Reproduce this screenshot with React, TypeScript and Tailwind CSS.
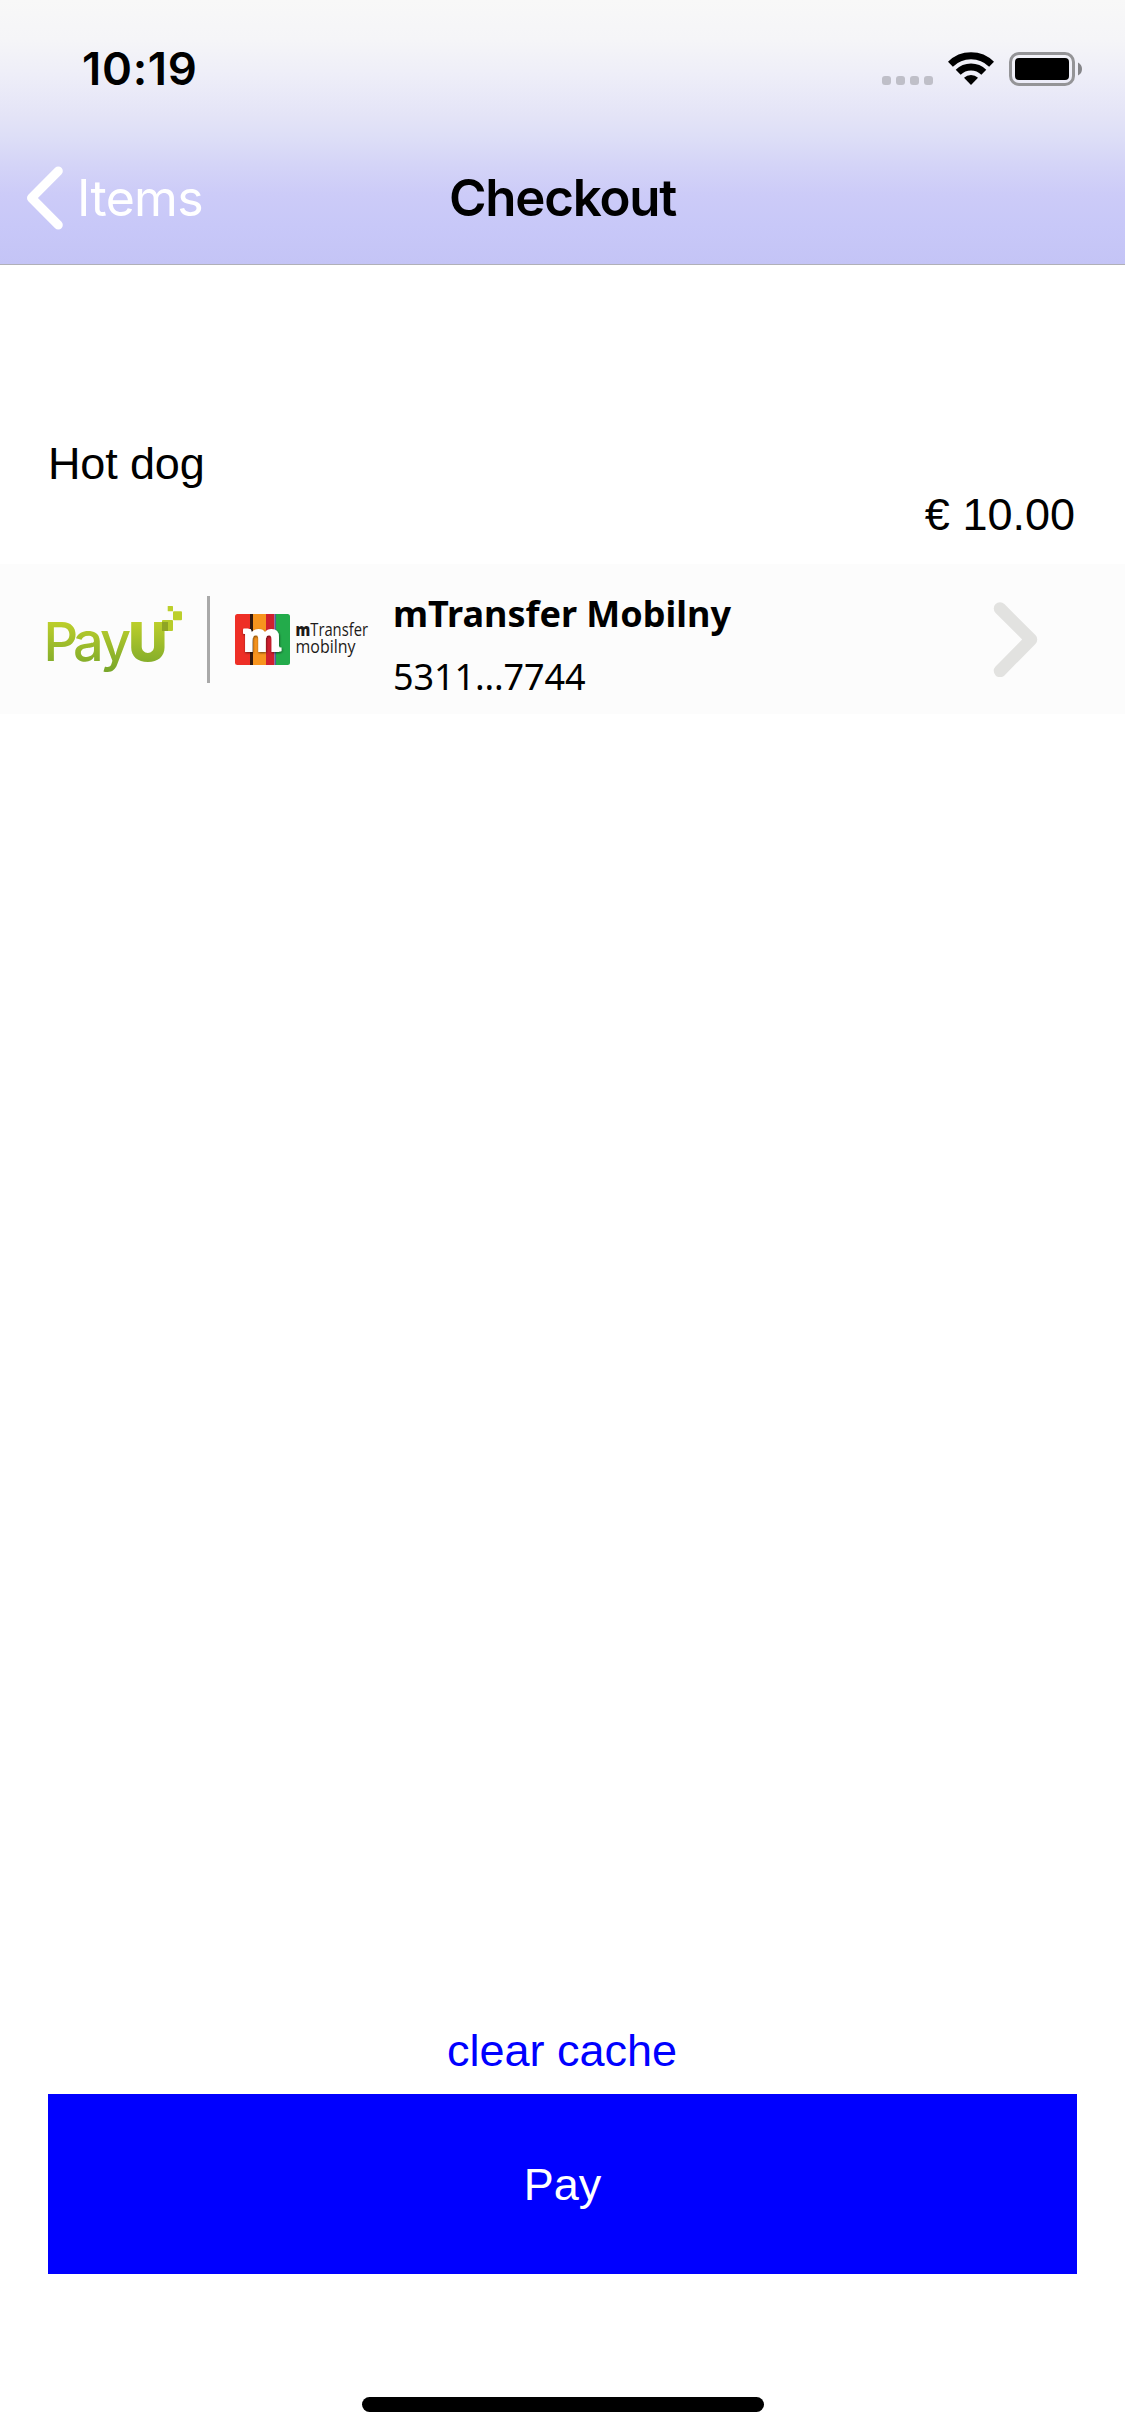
function StatusBar() {
  return (
    <div className="flex h-[132px] items-start justify-between pr-[43px] pl-[82px]">
      <span className="mt-[42px] font-['Inter',sans-serif] text-[45.5px] leading-[54px] font-semibold tracking-[0.7px] text-black">
        10:19
      </span>
      <div className="mt-[52px] flex items-start">
        <div className="mt-6 flex gap-[5px]">
          <i className="size-[9px] rounded-[3px] bg-[#bfbfc8]" />
          <i className="size-[9px] rounded-[3px] bg-[#bfbfc8]" />
          <i className="size-[9px] rounded-[3px] bg-[#bfbfc8]" />
          <i className="size-[9px] rounded-[3px] bg-[#bfbfc8]" />
        </div>
        <svg className="ml-[15px]" width="46" height="34" viewBox="0 0 46 34">
          <path d="M2.4 12.2a29.1 29.1 0 0 1 41.2 0" fill="none" stroke="#000" strokeWidth="7" />
          <path d="M10.2 20.2a18.1 18.1 0 0 1 25.6 0" fill="none" stroke="#000" strokeWidth="7" />
          <path d="M23 33l-7-7.2a10 10 0 0 1 14 0z" />
        </svg>
        <svg className="ml-[15px]" width="73" height="34" viewBox="0 0 73 34">
          <rect x="1.5" y="1.5" width="63" height="31" rx="8.5" fill="none" stroke="#949497" strokeWidth="3" />
          <rect x="6" y="6" width="54" height="22" rx="4" />
          <path d="M69 10.5q4 2 4 6.5t-4 6.5z" fill="#858589" />
        </svg>
      </div>
    </div>
  );
}

function NavBar() {
  return (
    <div className="grid h-[132px] grid-cols-3 items-center">
      <button className="flex h-[132px] items-center pl-[26px] text-white">
        <svg width="38" height="64" viewBox="0 0 38 64">
          <path d="M32.3 5L5.5 32l26.8 27" fill="none" stroke="currentColor" strokeWidth="9" strokeLinecap="round" strokeLinejoin="round" />
        </svg>
        <span className="ml-[13px] font-['Inter',sans-serif] text-[50px] leading-[60px] tracking-[-0.7px]">Items</span>
      </button>
      <h1 className="text-center font-['Inter',sans-serif] text-[51px] leading-[60px] font-semibold tracking-[-1.2px] text-black">
        Checkout
      </h1>
    </div>
  );
}

function PayULogo() {
  return (
    <svg className="overflow-visible" width="138" height="76" viewBox="46 601 138 76" fontFamily="Inter, sans-serif" fontSize="54">
      <defs>
        <linearGradient id="lime" gradientUnits="userSpaceOnUse" x1="0" y1="620" x2="0" y2="672">
          <stop offset="0" stopColor="#bfd02b" />
          <stop offset="1" stopColor="#78a62b" />
        </linearGradient>
      </defs>
      <text y="661" fill="url(#lime)" fontWeight="500">
        <tspan x="43.5">P</tspan>
        <tspan x="73">a</tspan>
        <tspan x="100">y</tspan>
        <tspan x="128.8" fontWeight="900" fontSize="53">U</tspan>
      </text>
      <rect x="162" y="620" width="11" height="11" rx="1" fill="#b7cc2b" />
      <path d="M162 622h6v9h-6z" fill="#8fa424" />
      <rect x="173" y="611.3" width="9" height="9" rx="1" fill="#bccf2b" />
      <rect x="167.7" y="606" width="5.3" height="5.3" rx=".6" fill="#bccf2b" />
    </svg>
  );
}

function MTransferLogo() {
  return (
    <svg className="overflow-visible" width="134" height="52" viewBox="235 613 134 52">
      <defs>
        <clipPath id="tile">
          <rect x="235" y="614" width="55" height="51" rx="2.5" />
        </clipPath>
        <filter id="soft" x="-20%" y="-20%" width="140%" height="140%">
          <feDropShadow dx=".5" dy="1" stdDeviation=".9" floodColor="#000" floodOpacity=".55" />
        </filter>
      </defs>
      <g clipPath="url(#tile)">
        <path d="M235 614h15v51h-15z" fill="#ee2f26" />
        <path d="M250 614h3v51h-3z" fill="#33190f" />
        <path d="M253 614h13v51h-13z" fill="#f7941e" />
        <path d="M266 614h8.5v51H266z" fill="#d01f2e" />
        <path d="M274.5 614h1.7v51h-1.7z" fill="#4b5f9e" />
        <path d="M276 614h14v51h-14z" fill="#23ab4b" />
      </g>
      <g fill="#fff" filter="url(#soft)">
        <text x="242.5" y="651.5" fontFamily="Open Sans, sans-serif" fontWeight="800" fontSize="41" textLength="39" lengthAdjust="spacingAndGlyphs">m</text>
        <rect x="243" y="628.5" width="6" height="5.5" rx="1" />
        <path d="M276 646h3q0 2 2.5 1.5v3.5q-1.500 1-5.500.5z" />
      </g>
      <g fill="#1d1a18" fontFamily="Open Sans, sans-serif" fontSize="17.5">
        <text x="295.5" y="636" textLength="72.5" lengthAdjust="spacingAndGlyphs">
          <tspan fontWeight="800">m</tspan>Transfer
        </text>
        <text x="295.5" y="653" textLength="60" lengthAdjust="spacingAndGlyphs">mobilny</text>
      </g>
    </svg>
  );
}

function PaymentMethod() {
  return (
    <button className="flex h-[150px] w-full items-center bg-[#fcfcfc] pr-[87px] pl-[46px] text-left text-black">
      <PayULogo />
      <span className="ml-[23px] h-[87px] w-[3px] bg-[#a9a9a9]" />
      <span className="ml-[25px]">
        <MTransferLogo />
      </span>
      <span className="ml-6 flex flex-col pt-3 font-['Noto_Sans',sans-serif] text-[36px] leading-[63px] tracking-normal">
        <span className="font-bold">mTransfer Mobilny</span>
        <span className="tracking-[-0.1px]">5311...7744</span>
      </span>
      <svg className="ml-auto" width="45" height="76" viewBox="0 0 45 76">
        <path d="M7 7.5l31 31L7 70" fill="none" stroke="#e2e2e0" strokeWidth="12.5" strokeLinecap="round" strokeLinejoin="round" />
      </svg>
    </button>
  );
}

export default function App() {
  return (
    <main className="flex h-[2436px] w-[1125px] flex-col bg-white font-['Liberation_Sans',Arial,sans-serif] text-[45px] leading-[51px] text-black">
      <header className="h-[265px] border-b border-[#b0b0b8] bg-[linear-gradient(180deg,#f8f8f8_0px,#f5f5f8_40px,#eeeef8_75px,#e4e4f7_115px,#dddef7_138px,#d4d4f7_165px,#cccbf8_195px,#c8c8f8_225px,#c4c4f6_264px)]">
        <StatusBar />
        <NavBar />
      </header>
      <section className="mt-[173px] flex h-[126px] flex-col px-12">
        <span className="tracking-[-0.15px]">Hot dog</span>
        <span className="mr-0.5 self-end">€ 10.00</span>
      </section>
      <PaymentMethod />
      <footer className="mt-auto flex flex-col px-12">
        <button className="mr-px self-center text-[#0000ff]">clear cache</button>
        <button className="mt-[18px] h-[180px] bg-[#0000ff] text-white">Pay</button>
        <div className="mt-[123px] mb-6 h-[15px] w-[402px] self-center rounded-full bg-black" />
      </footer>
    </main>
  );
}
